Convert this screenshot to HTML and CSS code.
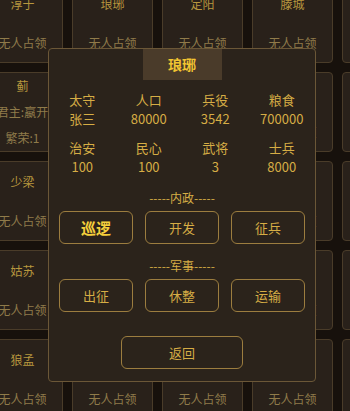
FILE: index.html
```html
<!DOCTYPE html>
<html>

<head>
    <meta charset="utf-8">
    <title>城池</title>
    <link rel="stylesheet" href="styles.css">
</head>

<body>
    <div class="map">
        <div class="map-grid">
            <div class="tile"><span class="tile-name">淳于</span><span>无人占领</span></div>
            <div class="tile"><span class="tile-name">琅琊</span><span>无人占领</span></div>
            <div class="tile"><span class="tile-name">定阳</span><span>无人占领</span></div>
            <div class="tile"><span class="tile-name">滕城</span><span>无人占领</span></div>
            <div class="tile"><span class="tile-name">即墨</span><span>无人占领</span></div>

            <div class="tile"><span class="tile-name">蓟</span><span>君主:嬴开</span><span>繁荣:1</span></div>
            <div class="tile"><span class="tile-name">临淄</span><span>无人占领</span></div>
            <div class="tile"><span class="tile-name">莒</span><span>无人占领</span></div>
            <div class="tile"><span class="tile-name">薛</span><span>无人占领</span></div>
            <div class="tile"><span class="tile-name">彭城</span><span>无人占领</span></div>

            <div class="tile"><span class="tile-name">少梁</span><span>无人占领</span></div>
            <div class="tile"><span class="tile-name">大梁</span><span>无人占领</span></div>
            <div class="tile"><span class="tile-name">陶</span><span>无人占领</span></div>
            <div class="tile"><span class="tile-name">宛</span><span>无人占领</span></div>
            <div class="tile"><span class="tile-name">寿春</span><span>无人占领</span></div>

            <div class="tile"><span class="tile-name">姑苏</span><span>无人占领</span></div>
            <div class="tile"><span class="tile-name">会稽</span><span>无人占领</span></div>
            <div class="tile"><span class="tile-name">郢</span><span>无人占领</span></div>
            <div class="tile"><span class="tile-name">邯郸</span><span>无人占领</span></div>
            <div class="tile"><span class="tile-name">新郑</span><span>无人占领</span></div>

            <div class="tile"><span class="tile-name">狼孟</span><span>无人占领</span></div>
            <div class="tile"><span class="tile-name">晋阳</span><span>无人占领</span></div>
            <div class="tile"><span class="tile-name">安邑</span><span>无人占领</span></div>
            <div class="tile"><span class="tile-name">咸阳</span><span>无人占领</span></div>
            <div class="tile"><span class="tile-name">雍</span><span>无人占领</span></div>
        </div>
    </div>

    <div class="dialog">
        <div class="dialog-title">琅琊</div>

        <div class="stats">
            <span>太守</span><span>人口</span><span>兵役</span><span>粮食</span>
            <span>张三</span><span>80000</span><span>3542</span><span>700000</span>
        </div>
        <div class="stats second">
            <span>治安</span><span>民心</span><span>武将</span><span>士兵</span>
            <span>100</span><span>100</span><span>3</span><span>8000</span>
        </div>

        <div class="section">-----内政-----</div>
        <div class="actions">
            <button class="btn primary">巡逻</button>
            <button class="btn">开发</button>
            <button class="btn">征兵</button>
        </div>

        <div class="section">-----军事-----</div>
        <div class="actions">
            <button class="btn">出征</button>
            <button class="btn">休整</button>
            <button class="btn">运输</button>
        </div>

        <button class="btn wide">返回</button>
    </div>
</body>
</html>
```

FILE: styles.css
```css
body {
    margin: 0;
    background-color: #17110c;
    font-family: "Noto Sans CJK SC", sans-serif;
    overflow: hidden;
}

.map {
    width: 350px;
    height: 411px;
    overflow: hidden;
}

.map-grid {
    display: grid;
    grid-template-columns: repeat(5, 81px);
    grid-auto-rows: 80px;
    gap: 9px;
    margin: -17px 0 0 -18px;
}

.tile {
    background-color: #29211a;
    border: 1px solid #4a3c29;
    border-radius: 4px;
    display: flex;
    flex-direction: column;
    justify-content: space-around;
    align-items: center;
    font-size: 12px;
    line-height: 16px;
    color: #8f7b4a;
    white-space: nowrap;
}

.tile-name {
    color: #b8973e;
}

.dialog {
    position: absolute;
    left: 48px;
    top: 48px;
    width: 268px;
    height: 334px;
    box-sizing: border-box;
    background-color: #2b231b;
    border: 1px solid #6b5737;
    border-radius: 4px;
    display: flex;
    flex-direction: column;
    align-items: center;
    color: #d6ad45;
}

.dialog-title {
    width: 79px;
    height: 31px;
    line-height: 31px;
    text-align: center;
    background-color: #4a3b2a;
    color: #f2c531;
    font-size: 14px;
    font-weight: bold;
}

.stats {
    display: grid;
    grid-template-columns: repeat(4, 1fr);
    width: 100%;
    margin-top: 10px;
    text-align: center;
    font-size: 13px;
    line-height: 19px;
}

.section {
    margin-top: 14px;
    font-size: 12px;
    line-height: 16px;
}

.actions {
    display: flex;
    gap: 12px;
    margin-top: 5px;
}

.btn {
    width: 74px;
    height: 33px;
    box-sizing: border-box;
    border: 1.5px solid #9c7d3f;
    border-radius: 6px;
    background-color: transparent;
    color: #d6ad45;
    font-family: inherit;
    font-size: 13px;
    padding: 0;
}

.btn.primary {
    font-size: 15px;
    font-weight: bold;
    color: #f5cf3c;
}

.btn.wide {
    width: 122px;
    margin-top: 24px;
}
```
